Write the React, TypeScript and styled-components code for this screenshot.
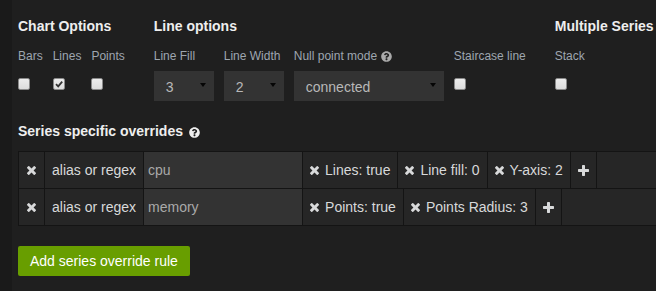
import React from "react";
import styled, { createGlobalStyle } from "styled-components";
import { FaQuestionCircle } from "react-icons/fa";

const GlobalStyle = createGlobalStyle`
  html, body { margin: 0; padding: 0; background: #1a1a1a; overflow: hidden; }
  body { font-family: "Liberation Sans", Arial, Helvetica, sans-serif; }
  * { box-sizing: border-box; }
`;

const Page = styled.div`
  margin-left: 12px;
  min-height: 291px;
  background: #1f1f1f;
  padding: 16px 0 0 6px;
  overflow: hidden;
`;

const SectionsRow = styled.div`
  display: flex;
  flex-wrap: nowrap;
  gap: 29px;
`;

const Section = styled.section`
  display: flex;
  flex-direction: column;
  flex-shrink: 0;
`;

const Title = styled.h5`
  margin: 0;
  font-size: 14px;
  font-weight: 700;
  line-height: 20px;
  color: #eeeeee;
  white-space: nowrap;
`;

const Options = styled.div`
  display: flex;
  gap: 10px;
  margin-top: 12px;
`;

const Option = styled.div`
  display: flex;
  flex-direction: column;
`;

const Label = styled.label`
  font-size: 12px;
  line-height: 16px;
  color: #9ea6b0;
  white-space: nowrap;
  margin-bottom: 7px;
`;

const Control = styled.div`
  height: 30px;
  display: flex;
  align-items: flex-start;
`;

const CheckBox = styled.span`
  width: 12px;
  height: 12px;
  margin-top: 7px;
  border-radius: 2px;
  background: linear-gradient(#ececec, #dcdcdc);
  border: 1px solid #8a8a8a;
  display: flex;
  align-items: center;
  justify-content: center;
`;

const CheckMark = styled.svg`
  width: 10px;
  height: 10px;
`;

const SelectBox = styled.div<{ $width: number }>`
  width: ${(p) => p.$width}px;
  height: 30px;
  background: #333333;
  display: flex;
  align-items: flex-start;
  justify-content: space-between;
  padding: 0 8px 0 12px;
  font-size: 14px;
  color: #b8b8b8;
`;

const SelectText = styled.span`
  margin-top: 6px;
  line-height: 20px;
  white-space: nowrap;
`;

const SelectArrow = styled.span`
  margin-top: 12px;
  width: 0;
  height: 0;
  border-left: 3px solid transparent;
  border-right: 3px solid transparent;
  border-top: 4px solid #050505;
`;

const HelpIcon = styled(FaQuestionCircle)<{ $color: string; $gap: number }>`
  width: 11px;
  height: 11px;
  margin-left: ${(p) => p.$gap}px;
  vertical-align: -2px;
  color: ${(p) => p.$color};
`;

const Overrides = styled.div`
  margin-top: 20px;
`;

const Table = styled.div`
  margin-top: 10px;
  margin-right: -40px;
  display: flex;
  flex-direction: column;
`;

const Row = styled.div<{ $last?: boolean }>`
  display: flex;
  background: #262626;
  border: 1px solid #141414;
  border-bottom: ${(p) => (p.$last ? "1px solid #141414" : "none")};
`;

const Item = styled.div<{ $pad?: number }>`
  display: flex;
  align-items: center;
  padding: 8px ${(p) => p.$pad ?? 7}px;
  border-right: 1px solid #141414;
  font-size: 14px;
  line-height: 20px;
  color: #d8d9da;
  white-space: nowrap;
`;

const SeriesInput = styled.input`
  width: 159px;
  height: 36px;
  border: none;
  border-right: 1px solid #141414;
  background: #333333;
  padding: 0 4px;
  font-family: inherit;
  font-size: 14px;
  color: #a9a9a9;
  outline: none;
`;

const IconSvg = styled.svg<{ $size: number; $gap?: number }>`
  width: ${(p) => p.$size}px;
  height: ${(p) => p.$size}px;
  margin-right: ${(p) => p.$gap ?? 0}px;
  fill: currentColor;
  flex-shrink: 0;
`;

const AddButton = styled.button`
  margin-top: 20px;
  height: 30px;
  padding: 0 12px;
  border: none;
  border-radius: 2px;
  background: #689e00;
  color: #ffffff;
  font-family: inherit;
  font-size: 14px;
  line-height: 20px;
  cursor: pointer;
`;

const RemoveIcon = ({ gap }: { gap?: number }) => (
  <IconSvg $size={9} $gap={gap} viewBox="302 366 1188 1188">
    <path d="M1490 1322q0 40-28 68l-136 136q-28 28-68 28t-68-28l-294-294-294 294q-28 28-68 28t-68-28l-136-136q-28-28-28-68t28-68l294-294-294-294q-28-28-28-68t28-68l136-136q28-28 68-28t68 28l294 294 294-294q28-28 68-28t68 28l136 136q28 28 28 68t-28 68l-294 294 294 294q28 28 28 68z" />
  </IconSvg>
);

const PlusIcon = () => (
  <IconSvg $size={11} viewBox="192 128 1408 1408">
    <path d="M1600 736v192q0 40-28 68t-68 28h-416v416q0 40-28 68t-68 28h-192q-40 0-68-28t-28-68v-416h-416q-40 0-68-28t-28-68v-192q0-40 28-68t68-28h416v-416q0-40 28-68t68-28h192q40 0 68 28t28 68v416h416q40 0 68 28t28 68z" />
  </IconSvg>
);

const Check = ({ checked }: { checked?: boolean }) => (
  <CheckBox>
    {checked && (
      <CheckMark viewBox="0 0 10 10">
        <path d="M2 5.2 L4.2 7.4 L8.2 2.6" fill="none" stroke="#333" strokeWidth="1.8" />
      </CheckMark>
    )}
  </CheckBox>
);

const Select = ({ value, width }: { value: string; width: number }) => (
  <SelectBox $width={width}>
    <SelectText>{value}</SelectText>
    <SelectArrow />
  </SelectBox>
);

type Override = { alias: string; tags: string[] };

const overrides: Override[] = [
  { alias: "cpu", tags: ["Lines: true", "Line fill: 0", "Y-axis: 2"] },
  { alias: "memory", tags: ["Points: true", "Points Radius: 3"] },
];

export default function App() {
  return (
    <>
      <GlobalStyle />
      <Page>
        <SectionsRow>
          <Section>
            <Title>Chart Options</Title>
            <Options>
              <Option>
                <Label>Bars</Label>
                <Control>
                  <Check />
                </Control>
              </Option>
              <Option>
                <Label>Lines</Label>
                <Control>
                  <Check checked />
                </Control>
              </Option>
              <Option>
                <Label>Points</Label>
                <Control>
                  <Check />
                </Control>
              </Option>
            </Options>
          </Section>
          <Section>
            <Title>Line options</Title>
            <Options>
              <Option>
                <Label>Line Fill</Label>
                <Control>
                  <Select value="3" width={60} />
                </Control>
              </Option>
              <Option>
                <Label>Line Width</Label>
                <Control>
                  <Select value="2" width={60} />
                </Control>
              </Option>
              <Option>
                <Label>
                  Null point mode
                  <HelpIcon $color="#a9a9a9" $gap={4} />
                </Label>
                <Control>
                  <Select value="connected" width={150} />
                </Control>
              </Option>
              <Option>
                <Label>Staircase line</Label>
                <Control>
                  <Check />
                </Control>
              </Option>
            </Options>
          </Section>
          <Section>
            <Title>Multiple Series</Title>
            <Options>
              <Option>
                <Label>Stack</Label>
                <Control>
                  <Check />
                </Control>
              </Option>
            </Options>
          </Section>
        </SectionsRow>

        <Overrides>
          <Title>
            Series specific overrides
            <HelpIcon $color="#eeeeee" $gap={6} />
          </Title>
          <Table>
            {overrides.map((o, i) => (
              <Row key={o.alias} $last={i === overrides.length - 1}>
                <Item $pad={8}>
                  <RemoveIcon />
                </Item>
                <Item>alias or regex</Item>
                <SeriesInput defaultValue={o.alias} />
                {o.tags.map((t) => (
                  <Item key={t}>
                    <RemoveIcon gap={6} />
                    {t}
                  </Item>
                ))}
                <Item>
                  <PlusIcon />
                </Item>
              </Row>
            ))}
          </Table>
        </Overrides>

        <AddButton>Add series override rule</AddButton>
      </Page>
    </>
  );
}
